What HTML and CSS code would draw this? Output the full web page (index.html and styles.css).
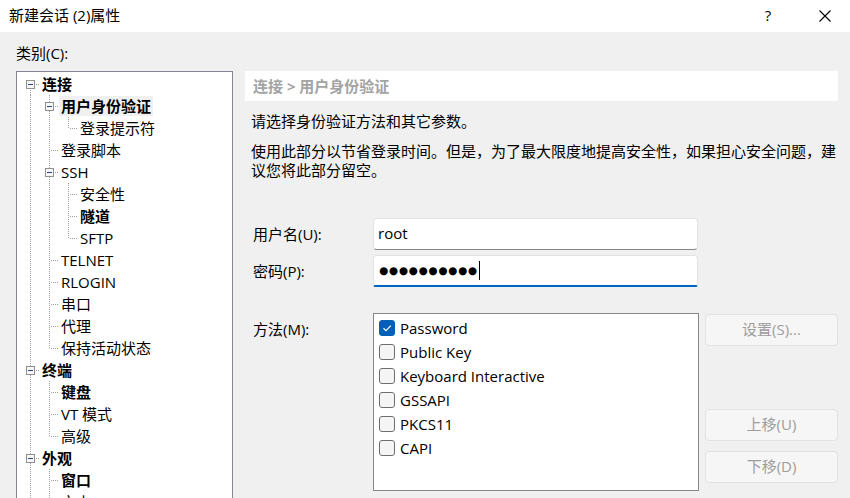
FILE: index.html
```html
<!DOCTYPE html>
<html lang="zh-CN">
<head>
<meta charset="utf-8">
<title>新建会话 (2)属性</title>
<link rel="stylesheet" href="styles.css">
</head>
<body>
<div class="titlebar">
  <div class="title">新建会话 (2)属性</div>
  <div class="tb-help">?</div>
  <div class="tb-close">
    <svg width="12" height="12" viewBox="0 0 12 12"><path d="M0.5 0.5 L11.5 11.5 M11.5 0.5 L0.5 11.5" stroke="#000" stroke-width="1.1" fill="none"/></svg>
  </div>
</div>
<div class="main">
  <div class="cat-label">类别(C):</div>
  <div class="tree">
    <div class="row"><span class="o first"><i class="exp"></i></span><span class="lbl b">连接</span></div>
    <div class="row"><span class="g v"></span><span class="o"><i class="exp"></i></span><span class="lbl b sel">用户身份验证</span></div>
    <div class="row"><span class="g v"></span><span class="g v"></span><span class="o half"></span><span class="lbl">登录提示符</span></div>
    <div class="row"><span class="g v"></span><span class="o"></span><span class="lbl">登录脚本</span></div>
    <div class="row"><span class="g v"></span><span class="o"><i class="exp"></i></span><span class="lbl">SSH</span></div>
    <div class="row"><span class="g v"></span><span class="g v"></span><span class="o"></span><span class="lbl">安全性</span></div>
    <div class="row"><span class="g v"></span><span class="g v"></span><span class="o"></span><span class="lbl b">隧道</span></div>
    <div class="row"><span class="g v"></span><span class="g v"></span><span class="o half"></span><span class="lbl">SFTP</span></div>
    <div class="row"><span class="g v"></span><span class="o"></span><span class="lbl">TELNET</span></div>
    <div class="row"><span class="g v"></span><span class="o"></span><span class="lbl">RLOGIN</span></div>
    <div class="row"><span class="g v"></span><span class="o"></span><span class="lbl">串口</span></div>
    <div class="row"><span class="g v"></span><span class="o"></span><span class="lbl">代理</span></div>
    <div class="row"><span class="g v"></span><span class="o half"></span><span class="lbl">保持活动状态</span></div>
    <div class="row"><span class="o"><i class="exp"></i></span><span class="lbl b">终端</span></div>
    <div class="row"><span class="g v"></span><span class="o"></span><span class="lbl b">键盘</span></div>
    <div class="row"><span class="g v"></span><span class="o"></span><span class="lbl">VT 模式</span></div>
    <div class="row"><span class="g v"></span><span class="o half"></span><span class="lbl">高级</span></div>
    <div class="row"><span class="o"><i class="exp"></i></span><span class="lbl b">外观</span></div>
    <div class="row"><span class="g v"></span><span class="o"></span><span class="lbl b">窗口</span></div>
    <div class="row"><span class="g v"></span><span class="o"></span><span class="lbl">文本</span></div>
  </div>
  <div class="panel">
    <div class="crumb">连接 &gt; 用户身份验证</div>
    <p class="intro">请选择身份验证方法和其它参数。</p>
    <p class="desc">使用此部分以节省登录时间。但是，为了最大限度地提高安全性，如果担心安全问题，建议您将此部分留空。</p>
    <div class="field">
      <label class="flabel">用户名(U):</label>
      <div class="input">root</div>
    </div>
    <div class="field">
      <label class="flabel">密码(P):</label>
      <div class="input focus"><span class="pw">●●●●●●●●●●</span><span class="caret"></span></div>
    </div>
    <div class="method">
      <label class="flabel mlabel">方法(M):</label>
      <div class="list">
        <div class="item"><span class="cb on"><svg width="14" height="14" viewBox="0 0 14 14"><path d="M3.5 7.2 L6 9.6 L10.8 4.6" stroke="#fff" stroke-width="1.2" fill="none"/></svg></span>Password</div>
        <div class="item"><span class="cb"></span>Public Key</div>
        <div class="item"><span class="cb"></span>Keyboard Interactive</div>
        <div class="item"><span class="cb"></span>GSSAPI</div>
        <div class="item"><span class="cb"></span>PKCS11</div>
        <div class="item"><span class="cb"></span>CAPI</div>
      </div>
      <div class="buttons">
        <div class="btn">设置(S)...</div>
        <div class="btn up">上移(U)</div>
        <div class="btn">下移(D)</div>
      </div>
    </div>
  </div>
</div>
</body>
</html>
```
FILE: styles.css
```css
html, body {
  margin: 0;
  padding: 0;
}
body {
  width: 850px;
  height: 498px;
  overflow: hidden;
  background: #f0f0f0;
  font-family: "Open Sans", "Noto Sans CJK SC", sans-serif;
  font-size: 15px;
  color: #000;
}
.titlebar {
  height: 32px;
  background: #fff;
  display: flex;
  align-items: center;
}
.title {
  flex: 1;
  padding-left: 9px;
  line-height: 20px;
  margin-top: -2px;
}
.tb-help {
  width: 44px;
  text-align: center;
  line-height: 20px;
  margin-top: -2px;
}
.tb-close {
  width: 50px;
  margin-left: 10px;
  display: flex;
  justify-content: center;
  align-items: center;
  margin-top: -1px;
}
.main {
  display: grid;
  grid-template-columns: 217px 593px;
  grid-template-rows: 39px auto;
  column-gap: 12px;
  padding-left: 16px;
}
.cat-label {
  grid-column: 1 / 3;
  line-height: 20px;
  padding-top: 11px;
}
.tree {
  grid-column: 1;
  grid-row: 2;
  height: 427px;
  box-sizing: border-box;
  border: 1px solid #828790;
  border-bottom: none;
  background: #fff;
  padding-top: 1px;
  overflow: hidden;
}
.row {
  display: flex;
  height: 22px;
  padding-left: 4px;
}
.g, .o {
  width: 19px;
  height: 22px;
  flex: none;
}
.g.v {
  background: repeating-linear-gradient(to bottom, #a0a0a0 0 1px, transparent 1px 2px) 9px 0 / 1px 22px no-repeat;
}
.o {
  display: flex;
  align-items: flex-start;
  background-image:
    repeating-linear-gradient(to right, #a0a0a0 0 1px, transparent 1px 2px),
    repeating-linear-gradient(to bottom, #a0a0a0 0 1px, transparent 1px 2px);
  background-repeat: no-repeat;
  background-position: 11px 11px, 9px 0;
  background-size: 8px 1px, 1px 22px;
}
.o.half {
  background-size: 8px 1px, 1px 12px;
}
.o.first {
  background-position: 11px 11px, 9px 11px;
  background-size: 8px 1px, 1px 11px;
}
.exp {
  width: 9px;
  height: 9px;
  box-sizing: border-box;
  border: 1px solid #919191;
  background: #f6f6f6;
  margin: 7px 0 0 5px;
  display: flex;
  align-items: center;
  justify-content: center;
}
.exp::before {
  content: "";
  width: 5px;
  height: 1px;
  background: #2d4780;
}
.lbl {
  margin-top: 1px;
  height: 20px;
  line-height: 20px;
  padding: 0 2px;
  white-space: nowrap;
}
.lbl.b {
  font-weight: 700;
}
.lbl.sel {
  background: #f0f0f0;
}
.panel {
  grid-column: 2;
  grid-row: 2;
}
.crumb {
  height: 30px;
  line-height: 30px;
  background: #fff;
  padding-left: 8px;
  color: #a3a3a3;
  font-weight: 700;
}
.intro {
  margin: 10px 0 0 6px;
  line-height: 20px;
}
.desc {
  margin: 11px 0 0 6px;
  line-height: 19px;
  width: 594px;
}
.field {
  display: flex;
  align-items: center;
  height: 32px;
  margin-top: 5px;
}
.desc + .field {
  margin-top: 38px;
}
.flabel {
  width: 128px;
  box-sizing: border-box;
  padding-left: 8px;
  line-height: 20px;
  flex: none;
}
.input {
  width: 325px;
  height: 32px;
  box-sizing: border-box;
  border: 1px solid #e3e3e3;
  border-bottom: 1px solid #868686;
  border-radius: 4px;
  background: #fff;
  padding: 0 0 2px 4px;
  line-height: 26px;
  display: flex;
  align-items: center;
}
.input.focus {
  border-bottom: 2px solid #0067c0;
  border-radius: 4px 4px 2px 2px;
  padding-bottom: 1px;
}
.pw {
  font-family: "DejaVu Sans", sans-serif;
  font-size: 10.5px;
  letter-spacing: 0.7px;
  line-height: 20px;
  margin-left: 1px;
}
.caret {
  width: 1px;
  height: 19px;
  background: #000;
  margin-left: 1px;
}
.method {
  display: flex;
  align-items: flex-start;
  margin-top: 26px;
}
.mlabel {
  margin-top: 6px;
}
.list {
  width: 326px;
  height: 178px;
  box-sizing: border-box;
  border: 1px solid #868686;
  background: #fff;
  padding: 2px 5px;
  flex: none;
}
.item {
  display: flex;
  align-items: center;
  height: 24px;
  line-height: 20px;
  white-space: nowrap;
}
.cb {
  width: 16px;
  height: 16px;
  box-sizing: border-box;
  border: 1px solid #6f6f6f;
  border-radius: 3px;
  background: #f5f5f5;
  margin-right: 5px;
  display: flex;
  align-items: center;
  justify-content: center;
  flex: none;
}
.cb.on {
  background: #005fb8;
  border-color: #005fb8;
}
.buttons {
  margin-left: 6px;
  display: flex;
  flex-direction: column;
  padding-top: 1px;
}
.btn {
  width: 133px;
  height: 32px;
  box-sizing: border-box;
  border: 1px solid #e2e2e2;
  border-radius: 4px;
  background: #f6f6f6;
  color: #9d9d9d;
  text-align: center;
  line-height: 29px;
}
.btn + .btn {
  margin-top: 10px;
}
.btn.up {
  margin-top: 63px;
}
```
